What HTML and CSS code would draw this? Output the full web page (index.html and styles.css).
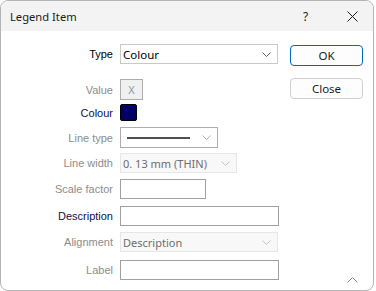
FILE: index.html
```html
<!DOCTYPE html>
<html>
<head>
<title>Legend Item</title>
<link rel="stylesheet" href="styles.css">
</head>
<body>

<div class="window">
    <div class="titlebar">
        <span class="title">Legend Item</span>
        <span class="help">?</span>
        <span class="close-x">
            <svg width="11" height="11" viewBox="0 0 11 11"><path d="M0.5 0.5 L10.5 10.5 M10.5 0.5 L0.5 10.5" stroke="#1b1b1b" stroke-width="1" fill="none"/></svg>
        </span>
    </div>

    <div class="content">
        <div class="form">
            <div class="row row-type">
                <label class="lbl">Type</label>
                <div class="combo combo-type">
                    <span class="combo-text">Colour</span>
                    <svg class="chev" width="9" height="5" viewBox="0 0 9 5"><path d="M0.5 0.5 L4.5 4.5 L8.5 0.5" stroke="#606060" fill="none"/></svg>
                </div>
            </div>
            <div class="row row-value">
                <label class="lbl disabled">Value</label>
                <div class="xbtn">X</div>
            </div>
            <div class="row row-colour">
                <label class="lbl navy">Colour</label>
                <div class="swatch"></div>
            </div>
            <div class="row row-linetype">
                <label class="lbl disabled">Line type</label>
                <div class="combo combo-line">
                    <span class="line-sample"></span>
                    <svg class="chev" width="9" height="5" viewBox="0 0 9 5"><path d="M0.5 0.5 L4.5 4.5 L8.5 0.5" stroke="#b0b0b0" fill="none"/></svg>
                </div>
            </div>
            <div class="row row-linewidth">
                <label class="lbl disabled">Line width</label>
                <div class="combo combo-off combo-width">
                    <span class="combo-text">0. 13 mm (THIN)</span>
                    <svg class="chev" width="9" height="5" viewBox="0 0 9 5"><path d="M0.5 0.5 L4.5 4.5 L8.5 0.5" stroke="#c4c4c4" fill="none"/></svg>
                </div>
            </div>
            <div class="row row-scale">
                <label class="lbl disabled">Scale factor</label>
                <div class="input input-scale"></div>
            </div>
            <div class="row row-desc">
                <label class="lbl navy">Description</label>
                <div class="input input-wide"></div>
            </div>
            <div class="row row-align">
                <label class="lbl disabled">Alignment</label>
                <div class="combo combo-off combo-type">
                    <span class="combo-text">Description</span>
                    <svg class="chev" width="9" height="5" viewBox="0 0 9 5"><path d="M0.5 0.5 L4.5 4.5 L8.5 0.5" stroke="#c4c4c4" fill="none"/></svg>
                </div>
            </div>
            <div class="row row-label">
                <label class="lbl disabled">Label</label>
                <div class="input input-wide"></div>
            </div>
        </div>

        <div class="buttons">
            <button class="btn btn-ok">OK</button>
            <button class="btn">Close</button>
        </div>
    </div>

    <svg class="grip" width="11" height="6" viewBox="0 0 11 6"><path d="M0.5 5.5 L5.5 0.5 L10.5 5.5" stroke="#8a8a8a" fill="none"/></svg>
</div>

</body>
</html>
```

FILE: styles.css
```css
body {
    margin: 0;
    background-color: #ffffff;
    font-family: "Liberation Sans", Arial, sans-serif;
}
.window {
    position: relative;
    box-sizing: border-box;
    width: 374px;
    height: 291px;
    border: 1px solid #b4b4b4;
    border-radius: 8px;
    background-color: #ffffff;
    overflow: hidden;
}
.titlebar {
    display: flex;
    align-items: center;
    height: 30px;
    background-color: #f3f3f3;
    font-family: "Noto Sans", sans-serif;
    font-size: 11px;
    color: #1b1b1b;
}
.title {
    margin-left: 9px;
    flex: 1;
    font-size: 11.2px;
}
.help {
    width: 10px;
    margin-right: 34px;
    font-size: 12px;
}
.close-x {
    display: flex;
    margin-right: 15px;
}
.content {
    display: flex;
    padding-top: 13px;
}
.form {
    width: 278px;
}
.row {
    display: flex;
    align-items: center;
}
.lbl {
    width: 112px;
    margin-right: 7px;
    text-align: right;
    font-size: 11px;
    color: #000000;
}
.lbl.disabled {
    color: #8c8c8c;
}
.lbl.navy {
    color: #10104a;
}
.row-value { margin-top: 15px; }
.row-colour { margin-top: 4px; }
.row-linetype { margin-top: 6px; }
.row-linewidth { margin-top: 5px; }
.row-scale { margin-top: 6px; }
.row-desc { margin-top: 7px; }
.row-align { margin-top: 6px; }
.row-label { margin-top: 8px; }

.combo {
    box-sizing: border-box;
    display: flex;
    align-items: center;
    height: 20px;
    border: 1px solid #c9c9c9;
    background-color: #ffffff;
    padding: 0 6px 0 2px;
}
.combo-type {
    width: 158px;
}
.combo-line {
    width: 98px;
    height: 21px;
    border-color: #adadad;
    padding-left: 6px;
}
.combo-width {
    width: 117px;
}
.combo-off {
    background-color: #f8f8f8;
    border-color: #e6e6e6;
}
.combo-text {
    flex: 1;
    font-family: "Noto Sans", sans-serif;
    font-size: 11.5px;
    color: #000000;
}
.combo-off .combo-text {
    color: #6e6e6e;
    font-size: 11px;
}
.line-sample {
    flex: 1;
    height: 2px;
    background-color: #505050;
    margin-right: 12px;
}
.chev {
    flex: none;
}
.xbtn {
    box-sizing: border-box;
    width: 23px;
    height: 21px;
    border: 1px solid #adadad;
    background-color: #f0f0f0;
    text-align: center;
    line-height: 19px;
    font-family: "Noto Sans", sans-serif;
    font-size: 11px;
    color: #8596b0;
}
.swatch {
    box-sizing: border-box;
    width: 17px;
    height: 17px;
    border: 1px solid #000000;
    border-radius: 2px;
    background-color: #000066;
}
.input {
    box-sizing: border-box;
    height: 20px;
    border: 1px solid #a0a0a0;
    background-color: #ffffff;
}
.input-scale {
    width: 86px;
}
.input-wide {
    width: 159px;
}
.buttons {
    display: flex;
    flex-direction: column;
    gap: 12px;
    margin-left: 11px;
    margin-top: 1px;
}
.btn {
    box-sizing: border-box;
    width: 73px;
    height: 21px;
    padding: 0;
    border: 1px solid #d0d0d0;
    border-radius: 4px;
    background-color: #fdfdfd;
    font-family: "Noto Sans", sans-serif;
    font-size: 11.5px;
    color: #1b1b1b;
}
.btn-ok {
    border-color: #0067c0;
}
.grip {
    position: absolute;
    right: 15px;
    bottom: 7px;
}
```
